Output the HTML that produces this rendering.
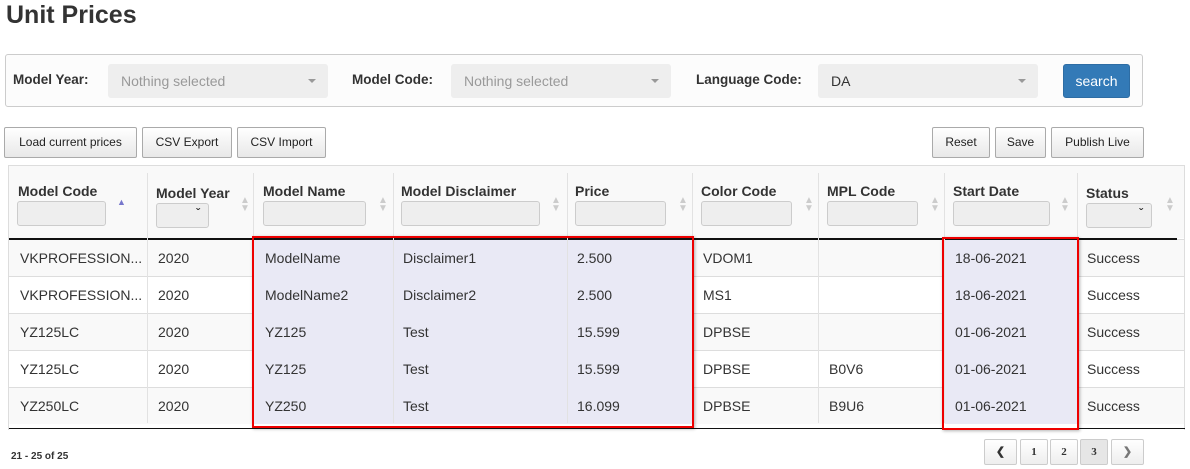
<!DOCTYPE html><html><head><style>
*{box-sizing:border-box;margin:0;padding:0}
body{width:1190px;height:469px;background:#fff;font-family:"Liberation Sans",sans-serif;color:#333;position:relative;overflow:hidden}
.a{position:absolute}
h1{position:absolute;left:6px;top:1px;font-size:25px;font-weight:bold;color:#333}
.panel{left:5px;top:54px;width:1138px;height:53px;border:1px solid #ccc;border-radius:3px;background:#fcfcfc}
.lbl{font-size:13.5px;font-weight:bold;top:72px}
.sel{top:64px;height:34px;background:#eee;border-radius:3px;font-size:14px;color:#999;padding:9px 13px}
.sel:after{content:"";position:absolute;right:12px;top:15px;border:4px solid transparent;border-top:4px solid #999}
.btn{top:127px;height:31px;border:1px solid #aaa;border-radius:2px;background:linear-gradient(#fff,#e8e8e8);font-size:12px;text-align:center;line-height:29px;color:#222}
.tbl{left:8px;top:165px;width:1177px;height:265px;border:1px solid #ddd;border-bottom:none}
.th{top:183px;font-size:14px;font-weight:bold;color:#333}
.inp{top:201px;height:25px;border:1px solid #ccc;border-radius:3px;background:#eee}
.vl{top:173px;height:250px;width:1px;background:#e2e2e2}
.row{left:9px;width:1175px;height:37px;border-top:1px solid #ddd}
.td{font-size:14px;color:#333}
.hl{background:#e9e9f5}
.arr{font-size:10px;color:#ccc;line-height:8px}
.pg{top:439px;height:26px;border:1px solid #ccc;border-radius:2px;background:linear-gradient(#fff,#eee);font-size:11px;text-align:center;line-height:24px;font-family:"Liberation Serif",serif;font-weight:bold}
.chev{font-size:12px;font-weight:bold;text-align:right;padding:2px 8px;color:#333}
</style></head><body>
<h1>Unit Prices</h1>
<div class="a panel"></div>
<div class="a lbl" style="left:13px">Model Year:</div>
<div class="a sel" style="left:108px;width:220px">Nothing selected</div>
<div class="a lbl" style="left:352px">Model Code:</div>
<div class="a sel" style="left:451px;width:220px">Nothing selected</div>
<div class="a lbl" style="left:696px">Language Code:</div>
<div class="a sel" style="left:818px;width:220px;color:#333">DA</div>
<div class="a" style="left:1063px;top:64px;width:67px;height:34px;background:#337ab7;border:1px solid #2e6da4;border-radius:3px;color:#fff;font-size:14px;text-align:center;line-height:32px">search</div>
<div class="a btn" style="left:4px;width:133px">Load current prices</div>
<div class="a btn" style="left:142px;width:90px">CSV Export</div>
<div class="a btn" style="left:237px;width:89px">CSV Import</div>
<div class="a btn" style="left:932px;width:58px">Reset</div>
<div class="a btn" style="left:995px;width:51px">Save</div>
<div class="a btn" style="left:1051px;width:93px">Publish Live</div>
<div class="a tbl" style="background:#f9f9f9;height:73px"></div>
<div class="a tbl" style="background:transparent"></div>
<div class="a row" style="top:239px;background:#f9f9f9"></div>
<div class="a row" style="top:276px;background:#fff"></div>
<div class="a row" style="top:313px;background:#f9f9f9"></div>
<div class="a row" style="top:350px;background:#fff"></div>
<div class="a row" style="top:387px;background:#f9f9f9"></div>
<div class="a hl" style="left:254px;top:239px;width:438px;height:185px"></div>
<div class="a hl" style="left:945px;top:239px;width:132px;height:185px"></div>
<div class="a" style="left:9px;top:238px;width:1168px;height:2px;background:#111"></div>
<div class="a" style="left:9px;top:428px;width:1176px;height:1px;background:#111"></div>
<div class="a vl" style="left:147px"></div><div class="a vl" style="left:253px"></div><div class="a vl" style="left:393px"></div><div class="a vl" style="left:567px"></div><div class="a vl" style="left:692px"></div><div class="a vl" style="left:818px"></div><div class="a vl" style="left:944px"></div><div class="a vl" style="left:1077px"></div>
<div class="a th" style="left:18px">Model Code</div><div class="a th" style="left:156px;top:185px">Model Year</div><div class="a th" style="left:263px">Model Name</div><div class="a th" style="left:401px">Model Disclaimer</div><div class="a th" style="left:575px">Price</div><div class="a th" style="left:701px">Color Code</div><div class="a th" style="left:827px">MPL Code</div><div class="a th" style="left:953px">Start Date</div><div class="a th" style="left:1086px;top:185px">Status</div>
<div class="a inp" style="left:17px;width:89px"></div>
<div class="a inp chev" style="left:156px;width:53px;top:203px">&#711;</div>
<div class="a inp" style="left:263px;width:103px"></div><div class="a inp" style="left:401px;width:139px"></div><div class="a inp" style="left:575px;width:91px"></div><div class="a inp" style="left:701px;width:91px"></div><div class="a inp" style="left:827px;width:91px"></div><div class="a inp" style="left:953px;width:97px"></div>
<div class="a inp chev" style="left:1086px;width:66px;top:203px">&#711;</div>
<div class="a" style="left:117px;top:197px;font-size:9px;color:#77c">▲</div>
<div class="a arr" style="left:240px;top:197px">▲<br>▼</div><div class="a arr" style="left:378px;top:197px">▲<br>▼</div><div class="a arr" style="left:551px;top:197px">▲<br>▼</div><div class="a arr" style="left:678px;top:197px">▲<br>▼</div><div class="a arr" style="left:804px;top:197px">▲<br>▼</div><div class="a arr" style="left:930px;top:197px">▲<br>▼</div><div class="a arr" style="left:1060px;top:197px">▲<br>▼</div><div class="a arr" style="left:1165px;top:197px">▲<br>▼</div>
<div class="a td" style="left:20px;top:240px;line-height:37px">VKPROFESSION...<br>VKPROFESSION...<br>YZ125LC<br>YZ125LC<br>YZ250LC</div>
<div class="a td" style="left:158px;top:240px;line-height:37px">2020<br>2020<br>2020<br>2020<br>2020</div>
<div class="a td" style="left:265px;top:240px;line-height:37px">ModelName<br>ModelName2<br>YZ125<br>YZ125<br>YZ250</div>
<div class="a td" style="left:403px;top:240px;line-height:37px">Disclaimer1<br>Disclaimer2<br>Test<br>Test<br>Test</div>
<div class="a td" style="left:577px;top:240px;line-height:37px">2.500<br>2.500<br>15.599<br>15.599<br>16.099</div>
<div class="a td" style="left:703px;top:240px;line-height:37px">VDOM1<br>MS1<br>DPBSE<br>DPBSE<br>DPBSE</div>
<div class="a td" style="left:829px;top:240px;line-height:37px"><br><br><br>B0V6<br>B9U6</div>
<div class="a td" style="left:955px;top:240px;line-height:37px">18-06-2021<br>18-06-2021<br>01-06-2021<br>01-06-2021<br>01-06-2021</div>
<div class="a td" style="left:1087px;top:240px;line-height:37px">Success<br>Success<br>Success<br>Success<br>Success</div>
<div class="a" style="left:252px;top:236px;width:442px;height:192px;border:2px solid #e00;box-shadow:1px 1px 3px rgba(0,0,0,.3)"></div>
<div class="a" style="left:942px;top:237px;width:137px;height:193px;border:2px solid #e00;box-shadow:1px 1px 3px rgba(0,0,0,.3)"></div>
<div class="a" style="left:11px;top:451px;font-size:10px;font-weight:bold">21 - 25 of 25</div>
<div class="a pg" style="left:984px;width:33px">&#10094;</div><div class="a pg" style="left:1020px;width:28px">1</div><div class="a pg" style="left:1050px;width:28px">2</div><div class="a pg" style="left:1080px;width:28px;background:#e6e6e6">3</div><div class="a pg" style="left:1111px;width:33px;color:#777">&#10095;</div>
</body></html>
